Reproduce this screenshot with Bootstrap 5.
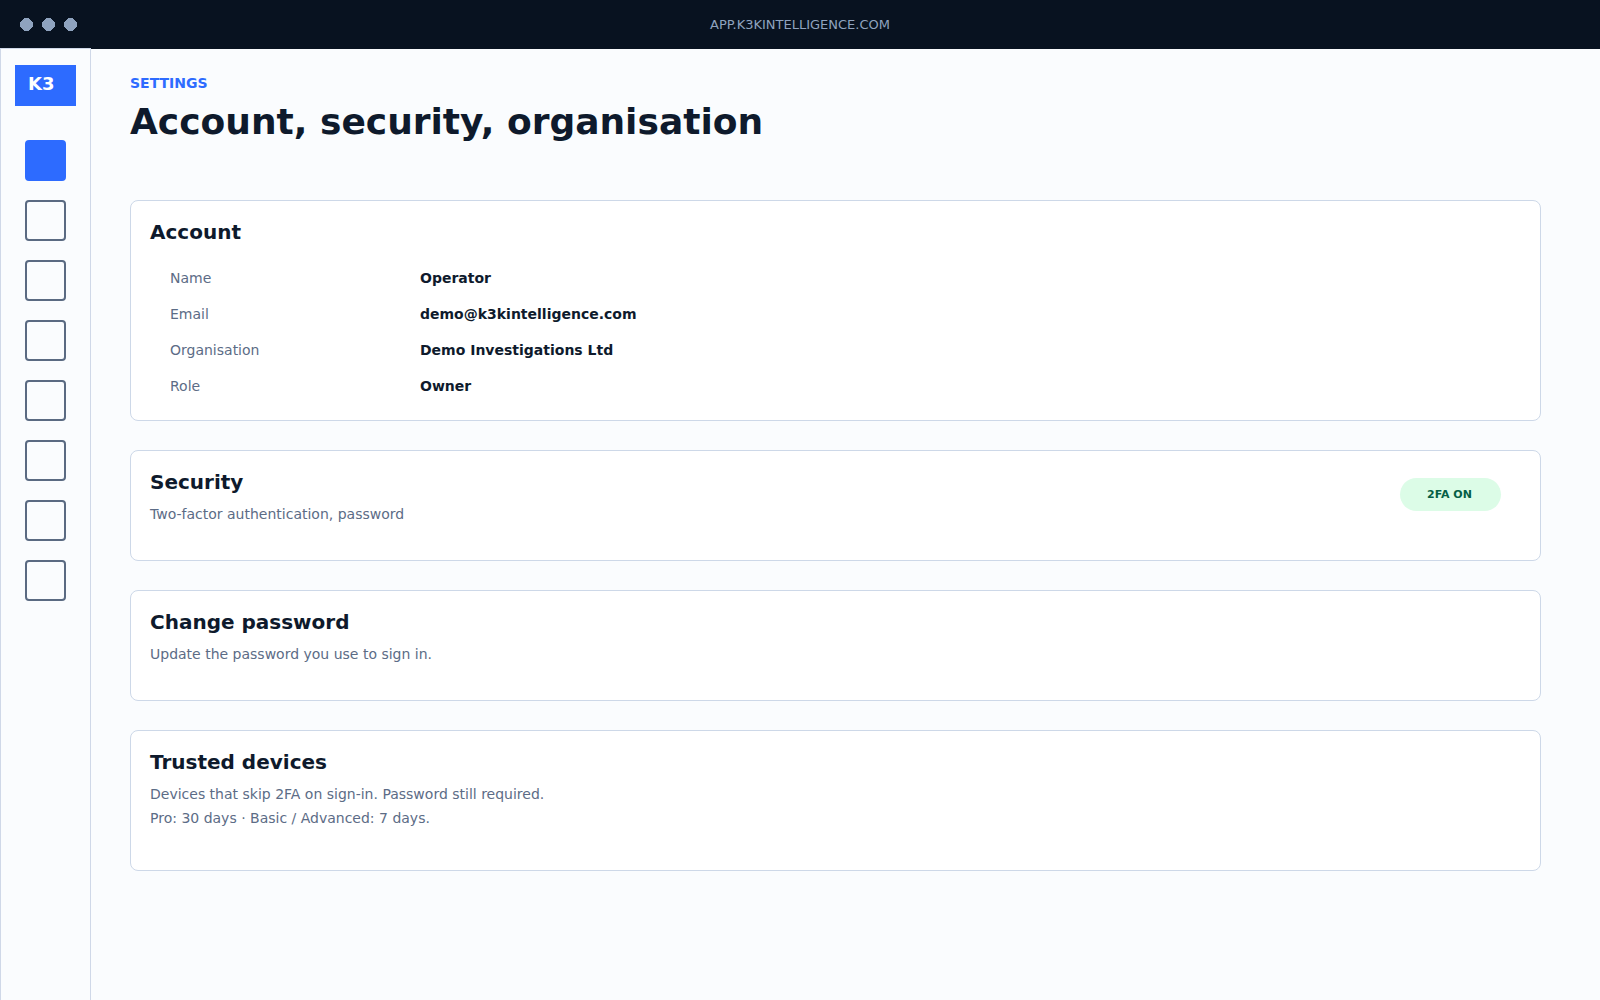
<!DOCTYPE html>
<html lang="en"><head><meta charset="utf-8"><title>Settings</title>
<meta name="viewport" content="width=device-width, initial-scale=1">
<link href="https://cdn.jsdelivr.net/npm/bootstrap@5.3.0/dist/css/bootstrap.min.css" rel="stylesheet">
<style>
body{font-family:"DejaVu Sans",sans-serif;background:#fafcfe;color:#0e1a2c;height:1000px;overflow:hidden;line-height:1}
.topbar{height:49px;background:#081220;color:#8fa3bf;font-size:13px;padding-left:20px}
.dots{gap:9px}
.dots svg{display:block;fill:#8fa3bf;shape-rendering:crispEdges}
.addr{flex:1;text-align:center;margin-right:77px}
.side{width:91px;border:1px solid #cfd8e8;border-bottom:0;margin-top:-1px;padding-top:16px}
.brand{width:61px;height:41px;background:#2d6bff;color:#fff;font-size:18px;padding:10px 0 0 13px;margin-bottom:34px}
.navbox{width:41px;height:41px;border:2px solid #5a6a82;border-radius:4px;margin-bottom:19px}
.navbox.active{background:#2d6bff;border-color:#2d6bff}
.main{padding:27px 59px 0 39px}
.eyebrow{font-size:14px;color:#2d6bff;margin-bottom:11px}
h1{font-size:36px;line-height:42px;margin:0 0 57px;font-weight:700}
.panel{background:#fff;border:1px solid #cdd8e8;border-radius:8px;padding:19px;margin-bottom:29px}
.panel-lg{height:221px}
.panel-sm{height:111px}
.panel-md{height:141px}
h2{font-size:20px;line-height:24px;margin:0;font-weight:700}
.sub{font-size:14px;line-height:24px;color:#5c6c86;margin-top:8px}
.fields{margin:16px 0 0}
.field{font-size:14px;line-height:36px;padding-left:20px}
.field dt{width:250px;font-weight:400;color:#5c6c86}
.field dd{margin:0;font-weight:700}
.status{width:101px;height:33px;border-radius:17px;background:#dcfce7;color:#065f46;font-size:11px;margin:8px 20px 0 0;padding-right:2px}
</style></head><body class="d-flex flex-column">
<header class="topbar d-flex align-items-center"><div class="dots d-flex">
<svg width="13" height="13"><path d="M4 0h5v1h1v1h1v1h1v1h1v5h-1v1h-1v1h-1v1H9v1H4v-1H3v-1H2v-1H1V9H0V4h1V3h1V2h1V1h1z"/></svg><svg width="13" height="13"><path d="M4 0h5v1h1v1h1v1h1v1h1v5h-1v1h-1v1h-1v1H9v1H4v-1H3v-1H2v-1H1V9H0V4h1V3h1V2h1V1h1z"/></svg><svg width="13" height="13"><path d="M4 0h5v1h1v1h1v1h1v1h1v5h-1v1h-1v1h-1v1H9v1H4v-1H3v-1H2v-1H1V9H0V4h1V3h1V2h1V1h1z"/></svg></div><div class="addr">APP.K3KINTELLIGENCE.COM</div></header>
<div class="d-flex flex-grow-1">
<nav class="side d-flex flex-column align-items-center flex-shrink-0"><div class="brand fw-bold">K3</div>
<div class="navbox active"></div><div class="navbox"></div><div class="navbox"></div><div class="navbox"></div><div class="navbox"></div><div class="navbox"></div><div class="navbox"></div><div class="navbox"></div></nav>
<main class="main flex-grow-1"><div class="eyebrow fw-bold">SETTINGS</div><h1>Account, security, organisation</h1>
<section class="panel panel-lg"><h2>Account</h2><dl class="fields">
<div class="field d-flex"><dt>Name</dt><dd>Operator</dd></div><div class="field d-flex"><dt>Email</dt><dd>demo@k3kintelligence.com</dd></div><div class="field d-flex"><dt>Organisation</dt><dd>Demo Investigations Ltd</dd></div><div class="field d-flex"><dt>Role</dt><dd>Owner</dd></div></dl></section>
<section class="panel panel-sm d-flex justify-content-between"><div><h2>Security</h2><div class="sub">Two-factor authentication, password</div></div><div class="status fw-bold d-flex align-items-center justify-content-center">2FA ON</div></section>
<section class="panel panel-sm"><h2>Change password</h2><div class="sub">Update the password you use to sign in.</div></section>
<section class="panel panel-md"><h2>Trusted devices</h2><div class="sub">Devices that skip 2FA on sign-in. Password still required.<br>Pro: 30 days · Basic / Advanced: 7 days.</div></section>
</main></div>
<script src="https://cdn.jsdelivr.net/npm/bootstrap@5.3.0/dist/js/bootstrap.bundle.min.js"></script>
</body></html>
